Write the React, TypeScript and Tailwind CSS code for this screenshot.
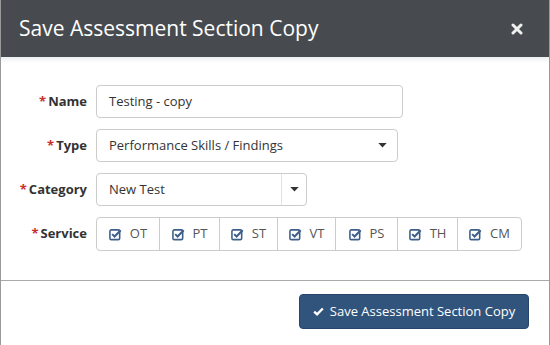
const services = [
  { code: "OT", w: "w-[62px]" },
  { code: "PT", w: "w-[60px]" },
  { code: "ST", w: "w-[58px]" },
  { code: "VT", w: "w-[58px]" },
  { code: "PS", w: "w-[62px]" },
  { code: "TH", w: "w-[60px]" },
  { code: "CM", w: "w-[64px]" },
];

function CheckSquare() {
  return (
    <svg viewBox="0 0 14 14" className="size-[13px]" fill="none">
      <rect x="1" y="2" width="10.5" height="10.5" rx="1.5" stroke="#3e5f8a" strokeWidth="1.7" />
      <path d="M3.4 6.6 L6 9.2 L12.6 2.4" stroke="#3e5f8a" strokeWidth="2.2" />
    </svg>
  );
}

function Caret() {
  return (
    <svg viewBox="0 0 10 6" className="h-[5px] w-[9px]">
      <path d="M0 0 H10 L5 5.5 Z" fill="#333" />
    </svg>
  );
}

function Label({ text }: { text: string }) {
  return (
    <div className="flex w-[95px] shrink-0 items-center justify-end pr-[9px] text-[13px] font-bold text-[#333]">
      <span className="mr-[2px] text-[#c9302c]">*</span>
      {text}
    </div>
  );
}

export default function App() {
  return (
    <div
      className="flex h-[345px] w-[550px] flex-col border-x border-[#9a9a9a] bg-white"
      style={{ fontFamily: '"Open Sans", sans-serif' }}
    >
      {/* Header */}
      <div className="flex h-[57px] shrink-0 items-center justify-between bg-[#474b50] pl-[18px] pr-[26px]">
        <h1 className="text-[21px] text-white">Save Assessment Section Copy</h1>
        <svg viewBox="0 0 12 12" className="size-[12px]">
          <path d="M2 2 L10 10 M10 2 L2 10" stroke="#f0f0f0" strokeWidth="3" strokeLinecap="round" />
        </svg>
      </div>
      <div className="h-[6px] shrink-0 bg-gradient-to-b from-[#eceef1] to-white" />

      {/* Form */}
      <div className="flex flex-col gap-[11px] pt-[22px] pb-[29px]">
        <div className="flex h-[33px]">
          <Label text="Name" />
          <div className="flex w-[307px] items-center rounded-[4px] border border-[#cccccc] px-[12px] text-[13px] text-[#333]">
            Testing - copy
          </div>
        </div>
        <div className="flex h-[33px]">
          <Label text="Type" />
          <div className="flex w-[302px] items-center justify-between rounded-[4px] border border-[#cccccc] pr-[10px] pl-[12px] text-[13px] text-[#333]">
            Performance Skills / Findings
            <Caret />
          </div>
        </div>
        <div className="flex h-[33px]">
          <Label text="Category" />
          <div className="flex w-[211px] rounded-[4px] border border-[#cccccc] text-[13px] text-[#333]">
            <div className="flex flex-1 items-center px-[12px]">New Test</div>
            <div className="flex w-[25px] items-center justify-center border-l border-[#e2e2e2]">
              <Caret />
            </div>
          </div>
        </div>
        <div className="flex h-[34px]">
          <Label text="Service" />
          <div className="flex rounded-[4px] border border-[#cccccc]">
            {services.map((s, i) => (
              <div
                key={s.code}
                className={`flex ${s.w} items-center justify-center gap-[8px] text-[13px] text-[#555] ${i > 0 ? "border-l border-[#cccccc]" : ""}`}
              >
                <CheckSquare />
                {s.code}
              </div>
            ))}
          </div>
        </div>
      </div>

      {/* Footer */}
      <div className="flex flex-1 items-start justify-end border-t border-[#a9a9a9] pt-[13px] pr-[20px]">
        <button
          type="button"
          className="flex h-[35px] w-[230px] items-center justify-center gap-[6px] rounded-[4px] border border-[#28466b] bg-[#31547c] text-[13px] text-white"
        >
          <svg viewBox="0 0 12 10" className="h-[9px] w-[11px]">
            <path d="M1.2 5.2 L4.4 8.2 L10.8 1.6" stroke="#fff" strokeWidth="2.6" fill="none" />
          </svg>
          Save Assessment Section Copy
        </button>
      </div>
    </div>
  );
}
